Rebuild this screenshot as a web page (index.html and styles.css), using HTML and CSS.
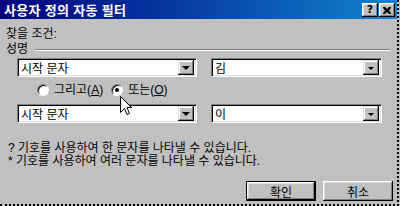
FILE: index.html
```html
<!DOCTYPE html>
<html lang="ko">
<head>
<meta charset="utf-8">
<link rel="stylesheet" href="styles.css">
</head>
<body>
<div class="win">
  <div class="titlebar">
    <span class="title">사용자 정의 자동 필터</span>
    <div class="tbtns">
      <span class="tbtn q">?</span>
      <span class="tbtn"><svg width="8" height="7" viewBox="0 0 8 7"><path d="M0 0h2l2 2 2-2h2v1l-2 2.5 2 2.5v1h-2l-2-2-2 2h-2v-1l2-2.5-2-2.5z" fill="#000"/></svg></span>
    </div>
  </div>
  <div class="body">
    <div class="lbl">찾을 조건:</div>
    <div class="group"><span>성명</span><span class="groove"></span></div>
    <div class="row">
      <div class="combo combo-l"><span class="val">시작 문자</span><span class="arrow"><i class="tri"></i></span></div>
      <div class="combo combo-r"><span class="val">김</span><span class="arrow"><i class="tri small"></i></span></div>
    </div>
    <div class="radios">
      <label class="radio"><span class="circle"></span><span class="rtext">그리고(<u>A</u>)</span></label>
      <label class="radio"><span class="circle on"></span><span class="rtext">또는(<u>O</u>)</span></label>
    </div>
    <div class="row">
      <div class="combo combo-l"><span class="val">시작 문자</span><span class="arrow"><i class="tri"></i></span></div>
      <div class="combo combo-r"><span class="val">이</span><span class="arrow"><i class="tri small"></i></span></div>
    </div>
    <div class="notes">
      <p>? 기호를 사용하여 한 문자를 나타낼 수 있습니다.</p>
      <p>* 기호를 사용하여 여러 문자를 나타낼 수 있습니다.</p>
    </div>
    <div class="buttons">
      <button class="btn default">확인</button>
      <button class="btn">취소</button>
    </div>
  </div>
  <svg class="cursor" width="12" height="19" viewBox="0 0 12 19"><path d="M0.5 0.5V16.5L4.5 12.5L7 18.5L9.5 17.5L7 11.5H11.5Z" fill="#fff" stroke="#000" stroke-width="1" stroke-linejoin="miter"/></svg>
</div>
</body>
</html>
```

FILE: styles.css
```css
* { box-sizing: border-box; }
html, body { margin: 0; padding: 0; background: #c0c0c0; }
body { width: 400px; height: 206px; overflow: hidden; }
.win {
  position: relative;
  width: 399px;
  height: 206px;
  background: #c0c0c0;
  border-right: 2px dotted #000;
  border-bottom: 2px dotted #000;
  font-family: "Liberation Sans", "Noto Sans CJK KR", sans-serif;
  font-size: 12px;
  color: #000;
}
.titlebar {
  height: 19px;
  background: linear-gradient(to right, #000080, #1084d0);
  display: flex;
  align-items: center;
  justify-content: space-between;
  padding: 0 2px 0 4px;
}
.title {
  color: #fff;
  font-family: "Noto Sans CJK KR", sans-serif;
  font-weight: bold;
  font-size: 13px;
  line-height: 19px;
  letter-spacing: 0.3px;
}
.tbtns { display: flex; gap: 1px; margin-top: 1px; }
.tbtn {
  width: 16px; height: 14px;
  background: #c0c0c0;
  box-shadow: inset -1px -1px #000, inset 1px 1px #fff, inset -2px -2px #808080, inset 2px 2px #dfdfdf;
  display: flex; align-items: center; justify-content: center;
}
.tbtn.q { font-family: "DejaVu Sans", sans-serif; font-weight: bold; font-size: 11px; line-height: 14px; }
.body { padding-left: 6px; }
.lbl { margin-top: 8px; line-height: 14px; }
.group { display: flex; align-items: center; line-height: 14px; margin-top: 1px; }
.groove { flex: none; width: 355px; margin-left: 7px; margin-top: 2px; height: 2px; border-top: 1px solid #808080; border-bottom: 1px solid #fff; }
.row { display: flex; margin-left: 11px; margin-top: 2px; }
.row + .row { margin-top: 0; }
.combo {
  height: 19px;
  background: #fff;
  border: 1px solid; border-color: #808080 #fff #fff #808080;
  box-shadow: inset 1px 1px #000, inset -1px -1px #dfdfdf;
  display: flex; align-items: center;
  padding: 2px 2px 2px 3px;
}
.combo-l { width: 180px; }
.combo-r { width: 171px; margin-left: 14px; }
.val { flex: 1; line-height: 15px; font-family: "Noto Sans CJK KR", sans-serif; }
.arrow {
  width: 16px; height: 15px;
  background: #c0c0c0;
  box-shadow: inset -1px -1px #000, inset 1px 1px #dfdfdf, inset -2px -2px #808080, inset 2px 2px #fff;
  display: flex; align-items: center; justify-content: center;
}
.tri { width: 0; height: 0; border-left: 4px solid transparent; border-right: 4px solid transparent; border-top: 4px solid #000; margin-top: 1px; }
.tri.small { border-left-width: 3px; border-right-width: 3px; border-top-width: 3px; }
.radios { display: flex; height: 25px; align-items: center; margin-left: 31px; gap: 8px; }
.radio { display: flex; align-items: center; }
.circle {
  width: 12px; height: 12px; border-radius: 50%;
  background: #fff;
  border: 1px solid; border-color: #808080 #fff #fff #808080;
  box-shadow: inset 1px 1px #000;
  position: relative;
}
.circle.on::after {
  content: ""; position: absolute; left: 3px; top: 3px; width: 4px; height: 4px; border-radius: 50%; background: #000;
}
.rtext { margin-left: 5px; line-height: 14px; color: #000; }
.notes { margin-top: 19px; margin-left: 2px; }
.notes p { margin: 0; line-height: 13px; }
.buttons { display: flex; justify-content: flex-end; gap: 7px; margin-top: 13px; padding-right: 4px; }
.btn {
  font-family: "Noto Sans CJK KR", sans-serif;
  font-size: 12px;
  width: 70px; height: 20px;
  background: #c0c0c0;
  border: none; padding: 0;
  box-shadow: inset -1px -1px #000, inset 1px 1px #fff, inset -2px -2px #808080, inset 2px 2px #dfdfdf;
  color: #000;
}
.btn.default { box-shadow: inset 0 0 0 1px #000, inset -2px -2px #000, inset 2px 2px #fff, inset -3px -3px #808080, inset 3px 3px #dfdfdf; }
.cursor { position: absolute; left: 120px; top: 96px; }
```
